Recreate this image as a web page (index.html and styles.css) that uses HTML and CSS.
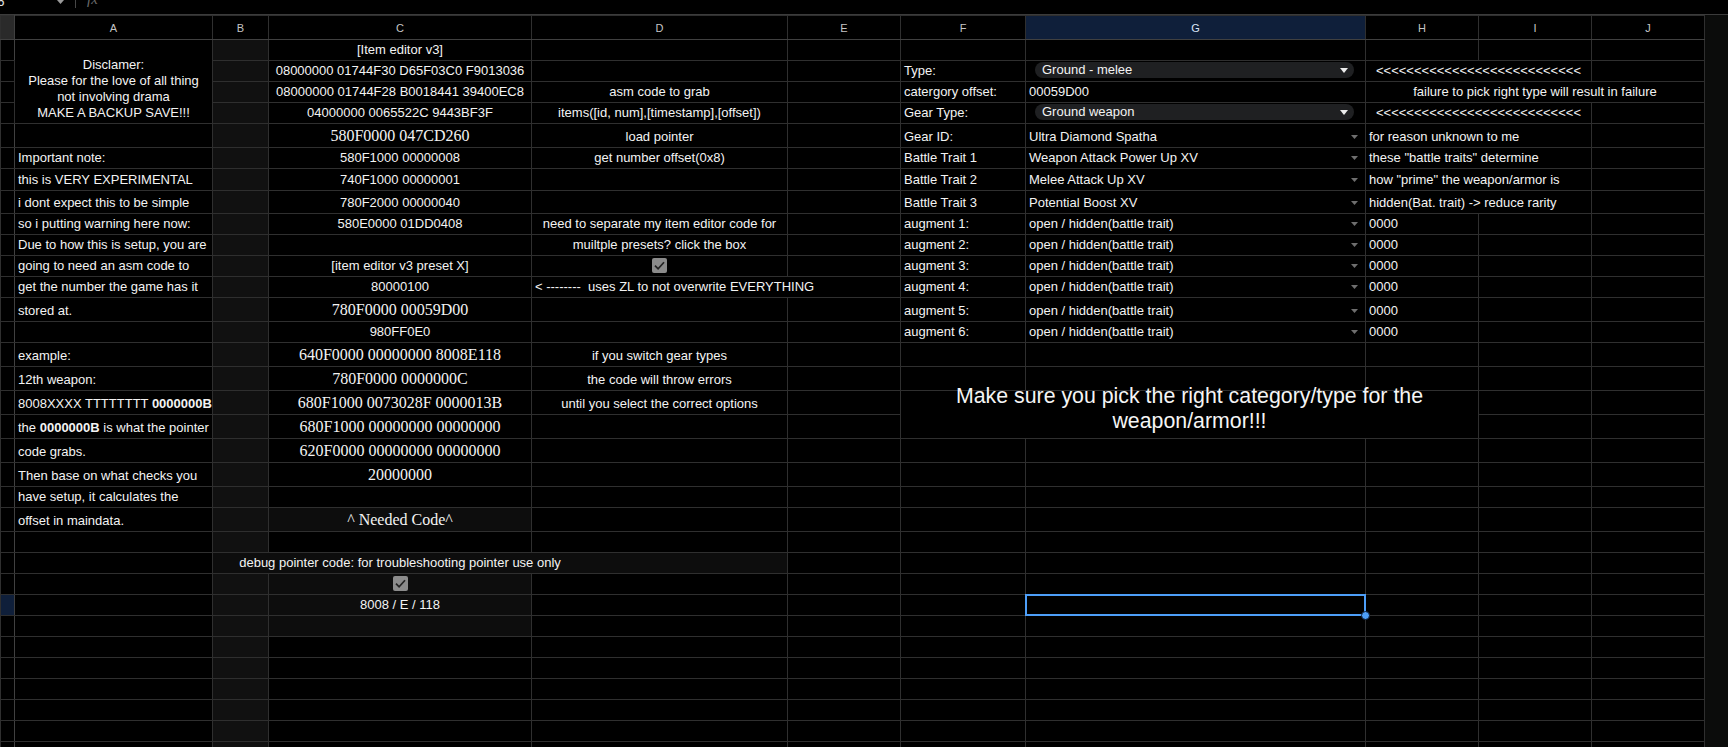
FILE: index.html
```html
<!DOCTYPE html>
<html lang="en">
<head>
    <meta charset="UTF-8">
    <meta name="viewport" content="width=device-width, initial-scale=1.0">
    <title>Item editor v3</title>
    <link rel="stylesheet" href="styles.css">
</head>
<body>
    <!-- formula bar, mostly scrolled off the top -->
    <div class="formula-bar">
        <span class="name-box">G26</span>
        <svg class="name-caret" width="7" height="4" viewBox="0 0 7 4"><path d="M0 0h7L3.5 4z" fill="#9a9a9a"/></svg>
        <span class="bar-divider"></span>
        <span class="fx">fx</span>
    </div>

    <div class="grid-wrap">
        <table class="sheet">
            <colgroup>
                <col class="c-rh"><col class="c-a"><col class="c-b"><col class="c-c"><col class="c-d"><col class="c-e"><col class="c-f"><col class="c-g"><col class="c-h"><col class="c-i"><col class="c-j">
            </colgroup>
            <thead>
                <tr class="col-heads">
                    <th class="corner"></th><th>A</th><th>B</th><th>C</th><th>D</th><th>E</th><th>F</th><th class="active">G</th><th>H</th><th>I</th><th>J</th>
                </tr>
            </thead>
            <tbody>
                <tr class="r21"><td class="rh"></td><td class="c disclaimer" rowspan="4">Disclamer:<br>Please for the love of all thing<br>not involving drama<br>MAKE A BACKUP SAVE!!!</td><td class="b"></td><td class="c">[Item editor v3]</td><td></td><td></td><td></td><td></td><td></td><td></td><td></td></tr>
                <tr class="r21"><td class="rh"></td><td class="b"></td><td class="c">08000000 01744F30 D65F03C0 F9013036</td><td></td><td></td><td>Type:</td><td><div class="chip"><span>Ground - melee</span><svg width="8" height="5" viewBox="0 0 8 5"><path d="M0 0h8L4 5z" fill="#ececec"/></svg></div></td><td class="c" colspan="2">&lt;&lt;&lt;&lt;&lt;&lt;&lt;&lt;&lt;&lt;&lt;&lt;&lt;&lt;&lt;&lt;&lt;&lt;&lt;&lt;&lt;&lt;&lt;&lt;&lt;&lt;&lt;</td><td></td></tr>
                <tr class="r21"><td class="rh"></td><td class="b"></td><td class="c">08000000 01744F28 B0018441 39400EC8</td><td class="c">asm code to grab</td><td></td><td>catergory offset:</td><td>00059D00</td><td class="c" colspan="3">failure to pick right type will result in failure</td></tr>
                <tr class="r21"><td class="rh"></td><td class="b"></td><td class="c">04000000 0065522C 9443BF3F</td><td class="c">items([id, num],[timestamp],[offset])</td><td></td><td>Gear Type:</td><td><div class="chip"><span>Ground weapon</span><svg width="8" height="5" viewBox="0 0 8 5"><path d="M0 0h8L4 5z" fill="#ececec"/></svg></div></td><td class="c" colspan="2">&lt;&lt;&lt;&lt;&lt;&lt;&lt;&lt;&lt;&lt;&lt;&lt;&lt;&lt;&lt;&lt;&lt;&lt;&lt;&lt;&lt;&lt;&lt;&lt;&lt;&lt;&lt;</td><td></td></tr>
                <tr class="r24"><td class="rh"></td><td></td><td class="b"></td><td class="c serif">580F0000 047CD260</td><td class="c">load pointer</td><td></td><td>Gear ID:</td><td><div class="dd"><span>Ultra Diamond Spatha</span><svg width="7" height="4" viewBox="0 0 7 4"><path d="M0 0h7L3.5 4z"/></svg></div></td><td colspan="2">for reason unknown to me</td><td></td></tr>
                <tr class="r21"><td class="rh"></td><td>Important note:</td><td class="b"></td><td class="c">580F1000 00000008</td><td class="c">get number offset(0x8)</td><td></td><td>Battle Trait 1</td><td><div class="dd"><span>Weapon Attack Power Up XV</span><svg width="7" height="4" viewBox="0 0 7 4"><path d="M0 0h7L3.5 4z"/></svg></div></td><td colspan="2">these "battle traits" determine</td><td></td></tr>
                <tr class="r22"><td class="rh"></td><td>this is VERY EXPERIMENTAL</td><td class="b"></td><td class="c">740F1000 00000001</td><td></td><td></td><td>Battle Trait 2</td><td><div class="dd"><span>Melee Attack Up XV</span><svg width="7" height="4" viewBox="0 0 7 4"><path d="M0 0h7L3.5 4z"/></svg></div></td><td colspan="2">how "prime" the weapon/armor is</td><td></td></tr>
                <tr class="r23"><td class="rh"></td><td>i dont expect this to be simple</td><td class="b"></td><td class="c">780F2000 00000040</td><td></td><td></td><td>Battle Trait 3</td><td><div class="dd"><span>Potential Boost XV</span><svg width="7" height="4" viewBox="0 0 7 4"><path d="M0 0h7L3.5 4z"/></svg></div></td><td colspan="2">hidden(Bat. trait) -&gt; reduce rarity</td><td></td></tr>
                <tr class="r21"><td class="rh"></td><td>so i putting warning here now:</td><td class="b"></td><td class="c">580E0000 01DD0408</td><td class="c">need to separate my item editor code for</td><td></td><td>augment 1:</td><td><div class="dd"><span>open / hidden(battle trait)</span><svg width="7" height="4" viewBox="0 0 7 4"><path d="M0 0h7L3.5 4z"/></svg></div></td><td>0000</td><td></td><td></td></tr>
                <tr class="r21"><td class="rh"></td><td>Due to how this is setup, you are</td><td class="b"></td><td></td><td class="c">muiltple presets? click the box</td><td></td><td>augment 2:</td><td><div class="dd"><span>open / hidden(battle trait)</span><svg width="7" height="4" viewBox="0 0 7 4"><path d="M0 0h7L3.5 4z"/></svg></div></td><td>0000</td><td></td><td></td></tr>
                <tr class="r21"><td class="rh"></td><td>going to need an asm code to</td><td class="b"></td><td class="c">[item editor v3 preset X]</td><td><svg class="check" width="15" height="15" viewBox="0 0 15 15"><rect width="15" height="15" rx="2" fill="#8b8b8b"/><path d="M3 7.6l3.1 3.2L12 4.2" fill="none" stroke="#232323" stroke-width="1.7"/></svg></td><td></td><td>augment 3:</td><td><div class="dd"><span>open / hidden(battle trait)</span><svg width="7" height="4" viewBox="0 0 7 4"><path d="M0 0h7L3.5 4z"/></svg></div></td><td>0000</td><td></td><td></td></tr>
                <tr class="r21"><td class="rh"></td><td>get the number the game has it</td><td class="b"></td><td class="c">80000100</td><td colspan="2">&lt; --------&nbsp; uses ZL to not overwrite EVERYTHING</td><td>augment 4:</td><td><div class="dd"><span>open / hidden(battle trait)</span><svg width="7" height="4" viewBox="0 0 7 4"><path d="M0 0h7L3.5 4z"/></svg></div></td><td>0000</td><td></td><td></td></tr>
                <tr class="r24"><td class="rh"></td><td>stored at.</td><td class="b"></td><td class="c serif">780F0000 00059D00</td><td></td><td></td><td>augment 5:</td><td><div class="dd"><span>open / hidden(battle trait)</span><svg width="7" height="4" viewBox="0 0 7 4"><path d="M0 0h7L3.5 4z"/></svg></div></td><td>0000</td><td></td><td></td></tr>
                <tr class="r21"><td class="rh"></td><td></td><td class="b"></td><td class="c">980FF0E0</td><td></td><td></td><td>augment 6:</td><td><div class="dd"><span>open / hidden(battle trait)</span><svg width="7" height="4" viewBox="0 0 7 4"><path d="M0 0h7L3.5 4z"/></svg></div></td><td>0000</td><td></td><td></td></tr>
                <tr class="r24"><td class="rh"></td><td>example:</td><td class="b"></td><td class="c serif">640F0000 00000000 8008E118</td><td class="c">if you switch gear types</td><td></td><td></td><td></td><td></td><td></td><td></td></tr>
                <tr class="r24"><td class="rh"></td><td>12th weapon:</td><td class="b"></td><td class="c serif">780F0000 0000000C</td><td class="c">the code will throw errors</td><td></td><td></td><td></td><td></td><td></td><td></td></tr>
                <tr class="r24"><td class="rh"></td><td><span class="spill">8008XXXX TTTTTTTT <b>0000000B</b></span></td><td class="b"></td><td class="c serif">680F1000 0073028F 0000013B</td><td class="c">until you select the correct options</td><td></td><td class="big" colspan="3" rowspan="2"><div class="big-text">Make sure you pick the right category/type for the<br>weapon/armor!!!</div></td><td></td><td></td></tr>
                <tr class="r24"><td class="rh"></td><td>the <b>0000000B</b> is what the pointer</td><td class="b"></td><td class="c serif">680F1000 00000000 00000000</td><td></td><td></td><td></td><td></td></tr>
                <tr class="r24"><td class="rh"></td><td>code grabs.</td><td class="b"></td><td class="c serif">620F0000 00000000 00000000</td><td></td><td></td><td></td><td></td><td></td><td></td><td></td></tr>
                <tr class="r24"><td class="rh"></td><td>Then base on what checks you</td><td class="b"></td><td class="c serif">20000000</td><td></td><td></td><td></td><td></td><td></td><td></td><td></td></tr>
                <tr class="r21"><td class="rh"></td><td>have setup, it calculates the</td><td class="b"></td><td></td><td></td><td></td><td></td><td></td><td></td><td></td><td></td></tr>
                <tr class="r24"><td class="rh"></td><td>offset in maindata.</td><td class="b"></td><td class="c serif shade">^ Needed Code^</td><td></td><td></td><td></td><td></td><td></td><td></td><td></td></tr>
                <tr class="r21"><td class="rh"></td><td></td><td class="b"></td><td></td><td></td><td></td><td></td><td></td><td></td><td></td><td></td></tr>
                <tr class="r21"><td class="rh"></td><td></td><td class="c shade debug" colspan="3">debug pointer code: for troubleshooting pointer use only</td><td></td><td></td><td></td><td></td><td></td><td></td></tr>
                <tr class="r21"><td class="rh"></td><td></td><td class="b"></td><td class="shade"><svg class="check" width="15" height="15" viewBox="0 0 15 15"><rect width="15" height="15" rx="2" fill="#8b8b8b"/><path d="M3 7.6l3.1 3.2L12 4.2" fill="none" stroke="#232323" stroke-width="1.7"/></svg></td><td></td><td></td><td></td><td></td><td></td><td></td><td></td></tr>
                <tr class="r21"><td class="rh active"></td><td></td><td class="b"></td><td class="c shade">8008 / E / 118</td><td></td><td></td><td></td><td class="selected"><div class="selection"><span class="fill-handle"></span></div></td><td></td><td></td><td></td></tr>
                <tr class="r21"><td class="rh"></td><td></td><td class="b"></td><td class="shade"></td><td></td><td></td><td></td><td></td><td></td><td></td><td></td></tr>
                <tr class="r21"><td class="rh"></td><td></td><td class="b"></td><td></td><td></td><td></td><td></td><td></td><td></td><td></td><td></td></tr>
                <tr class="r21"><td class="rh"></td><td></td><td class="b"></td><td></td><td></td><td></td><td></td><td></td><td></td><td></td><td></td></tr>
                <tr class="r21"><td class="rh"></td><td></td><td class="b"></td><td></td><td></td><td></td><td></td><td></td><td></td><td></td><td></td></tr>
                <tr class="r21"><td class="rh"></td><td></td><td class="b"></td><td></td><td></td><td></td><td></td><td></td><td></td><td></td><td></td></tr>
                <tr class="r21"><td class="rh"></td><td></td><td class="b"></td><td></td><td></td><td></td><td></td><td></td><td></td><td></td><td></td></tr>
                <tr class="r21"><td class="rh"></td><td></td><td class="b"></td><td></td><td></td><td></td><td></td><td></td><td></td><td></td><td></td></tr>
            </tbody>
        </table>
        <div class="gutter"></div>
    </div>
</body>
</html>
```

FILE: styles.css
```css
html, body {
    margin: 0;
    height: 100%;
    overflow: hidden; /* the sheet runs past the window */
    background: #000;
}
body {
    font-family: "Liberation Sans", Arial, sans-serif;
    font-size: 13px;
    color: #f3f3f3;
}

/* formula bar, only its lower edge is on screen */
.formula-bar {
    height: 14px;
    border-bottom: 1px solid #3b3b3b;
    display: flex;
    align-items: flex-start;
    overflow: hidden;
}
.name-box {
    width: 24px;
    margin-left: -20px;
    margin-top: -5px;
    line-height: 14px;
    color: #e6e6e6;
}
.name-caret {
    margin-left: 53px;
}
.bar-divider {
    width: 1px;
    height: 8px;
    margin-left: 11px;
    background: #474747;
}
.fx {
    margin-left: 11px;
    margin-top: -8px;
    line-height: 15px;
    font-family: "Liberation Serif", "Times New Roman", serif;
    font-style: italic;
    font-size: 15px;
    color: #6b6b6b;
}

.grid-wrap {
    display: flex;
}
.gutter {
    flex: 1;
    background: #0b0c0b;
}

/* the sheet itself */
.sheet {
    flex: none;
    width: 1704px;
    table-layout: fixed;
    border-collapse: collapse;
}
.c-rh { width: 14px; }
.c-a { width: 198px; }
.c-b { width: 56px; }
.c-c { width: 263px; }
.c-d { width: 256px; }
.c-e { width: 113px; }
.c-f { width: 125px; }
.c-g { width: 340px; }
.c-h, .c-i, .c-j { width: 113px; }

.sheet td,
.sheet th {
    border: 1px solid #2f2f2f;
    padding: 0 3px 2px;
    vertical-align: bottom;
    white-space: nowrap;
    line-height: 16px;
}
.sheet th {
    height: 23px;
    padding: 0;
    vertical-align: middle;
    text-align: center;
    font-weight: normal;
    font-size: 11px;
    color: #c5c5c5;
    border-bottom-color: #404040;
}
.sheet th.corner {
    background: #2a2a2a;
    border-right-color: #404040;
}
.sheet th.active {
    background: #0f1f3a;
    color: #d9e4f7;
}
.sheet td.rh {
    padding: 0;
    border-right-color: #404040;
}
.sheet td.rh.active {
    background: #0f1f3a;
}

.r21 { height: 21px; }
.r22 { height: 22px; }
.r23 { height: 23px; }
.r24 { height: 24px; }

.sheet .c { text-align: center; }
.sheet .b { background: #111; }
.sheet .shade { background: #0d0d0d; }
.sheet .serif {
    font-family: "Liberation Serif", "Times New Roman", serif;
    font-size: 16px;
    line-height: 19px;
}
.sheet .disclaimer {
    white-space: normal;
}
.sheet .debug {
    padding-right: 203px; /* centre the text on column C */
}
.sheet .big {
    white-space: normal;
    text-align: center;
    font-size: 21.33px;
    line-height: 25px;
    padding-bottom: 4px;
    color: #f5f5f5;
}
/* two lines are a little taller than the merged cell, let them spill upward */
.big-text {
    height: 40px;
    display: flex;
    flex-direction: column;
    justify-content: flex-end;
}
/* text running over into the next cell */
.spill {
    position: relative;
}

/* dropdown chips */
.chip {
    display: flex;
    align-items: center;
    justify-content: space-between;
    height: 16px;
    margin: 0 8px 1px 6px;
    padding: 0 6px 0 7px;
    border-radius: 8px;
    background: #1f2022;
}
.dd {
    display: flex;
    align-items: center;
    justify-content: space-between;
}
.dd svg {
    margin-right: 4px;
    fill: #6e6e6e;
}

.check {
    display: block;
    margin: 0 auto 1px;
}

/* selected cell */
.sheet td.selected {
    position: relative;
}
.selection {
    position: absolute;
    inset: -1px;
    border: 2px solid #4d9ef7;
}
.fill-handle {
    position: absolute;
    right: -6px;
    bottom: -6px;
    width: 7px;
    height: 7px;
    border-radius: 50%;
    background: #4d9ef7;
    border: 1px solid #0a1a33;
}
```
